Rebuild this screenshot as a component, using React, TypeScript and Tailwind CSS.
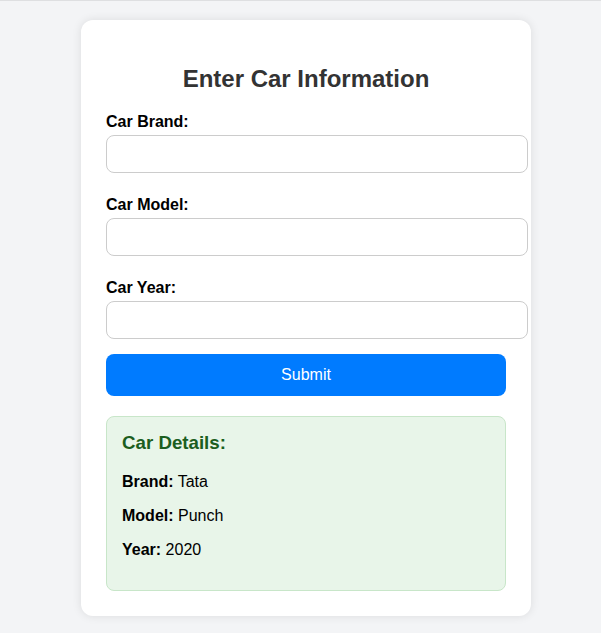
import React from "react";

export default function App() {
  const fields = ["Car Brand:", "Car Model:", "Car Year:"];
  return (
    <div
      className="min-h-[633px] bg-[#f3f4f6] border-t border-[#dedfe1] pt-[19px] pl-[81px] pb-[20px]"
      style={{ fontFamily: '"Liberation Sans", Arial, sans-serif' }}
    >
      <div className="w-[450px] bg-white rounded-[12px] shadow-[0_0_10px_rgba(0,0,0,0.1)] px-[25px] pt-[25px] pb-[25px]">
        <h2 className="text-[24px] leading-[28px] font-bold text-[#333333] text-center mt-[20px] mb-[20px]">
          Enter Car Information
        </h2>
        {fields.map((f) => (
          <div key={f} className="flex flex-col">
            <label className="text-[16px] leading-[18px] font-bold text-black">{f}</label>
            <input
              type="text"
              className="mt-[4px] mb-[23px] h-[38px] w-[422px] border border-[#cccccc] rounded-[8px] px-[10px] text-[16px] bg-white outline-none"
            />
          </div>
        ))}
        <button className="-mt-[8px] block w-[400px] h-[42px] bg-[#007bff] text-white text-[16px] rounded-[8px]">
          Submit
        </button>
        <div className="mt-[20px] bg-[#e8f5e9] border border-[#c8e6c9] rounded-[8px] px-[15px] pt-[15px] pb-[15px]">
          <h3 className="text-[18.72px] leading-[22px] font-bold text-[#1b5e20] mb-[19px]">Car Details:</h3>
          <p className="text-[16px] leading-[18px] text-black mb-[16px]">
            <strong>Brand:</strong> Tata
          </p>
          <p className="text-[16px] leading-[18px] text-black mb-[16px]">
            <strong>Model:</strong> Punch
          </p>
          <p className="text-[16px] leading-[18px] text-black mb-[16px]">
            <strong>Year:</strong> 2020
          </p>
        </div>
      </div>
    </div>
  );
}
